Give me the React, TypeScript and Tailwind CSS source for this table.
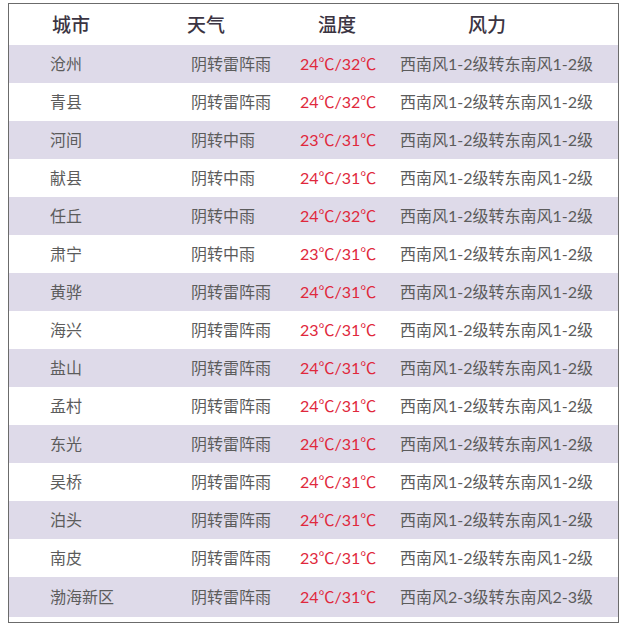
import React from "react";

interface Row {
  city: string;
  weather: string;
  temp: string;
  wind: string;
}

const w12 = "西南风1-2级转东南风1-2级";

const rows: Row[] = [
  { city: "沧州", weather: "阴转雷阵雨", temp: "24℃/32℃", wind: w12 },
  { city: "青县", weather: "阴转雷阵雨", temp: "24℃/32℃", wind: w12 },
  { city: "河间", weather: "阴转中雨", temp: "23℃/31℃", wind: w12 },
  { city: "献县", weather: "阴转中雨", temp: "24℃/31℃", wind: w12 },
  { city: "任丘", weather: "阴转中雨", temp: "24℃/32℃", wind: w12 },
  { city: "肃宁", weather: "阴转中雨", temp: "23℃/31℃", wind: w12 },
  { city: "黄骅", weather: "阴转雷阵雨", temp: "24℃/31℃", wind: w12 },
  { city: "海兴", weather: "阴转雷阵雨", temp: "23℃/31℃", wind: w12 },
  { city: "盐山", weather: "阴转雷阵雨", temp: "24℃/31℃", wind: w12 },
  { city: "孟村", weather: "阴转雷阵雨", temp: "24℃/31℃", wind: w12 },
  { city: "东光", weather: "阴转雷阵雨", temp: "24℃/31℃", wind: w12 },
  { city: "吴桥", weather: "阴转雷阵雨", temp: "24℃/31℃", wind: w12 },
  { city: "泊头", weather: "阴转雷阵雨", temp: "24℃/31℃", wind: w12 },
  { city: "南皮", weather: "阴转雷阵雨", temp: "23℃/31℃", wind: w12 },
  { city: "渤海新区", weather: "阴转雷阵雨", temp: "24℃/31℃", wind: "西南风2-3级转东南风2-3级" },
];

export default function App() {
  return (
    <div className="w-[626px] h-[630px] bg-white pt-[3px] pl-[8px] font-['Lato','Noto_Sans_CJK_SC',sans-serif]">
      <div className="w-[611px] border border-[#6b6b6b] bg-white pb-[5px]">
        {/* header */}
        <div className="grid grid-cols-[178px_131px_150px_1fr] h-[41px] items-center text-[19px] font-medium text-[#3b3442] font-['Noto_Sans_CJK_SC',sans-serif]">
          <div className="pl-[43px]">城市</div>
          <div>天气</div>
          <div>温度</div>
          <div>风力</div>
        </div>
        {rows.map((r, i) => (
          <div
            key={r.city}
            className={`grid grid-cols-[182px_109px_100px_1fr] items-center text-[16px] text-[#5c5c5c] ${
              i === rows.length - 1 ? "h-[40px]" : "h-[38px]"
            } ${i % 2 === 0 ? "bg-[#dedae9]" : "bg-white"}`}
          >
            <div className="pl-[41px]">{r.city}</div>
            <div>{r.weather}</div>
            <div className="text-[#e0283c]">{r.temp}</div>
            <div className="whitespace-nowrap">{r.wind}</div>
          </div>
        ))}
      </div>
    </div>
  );
}
